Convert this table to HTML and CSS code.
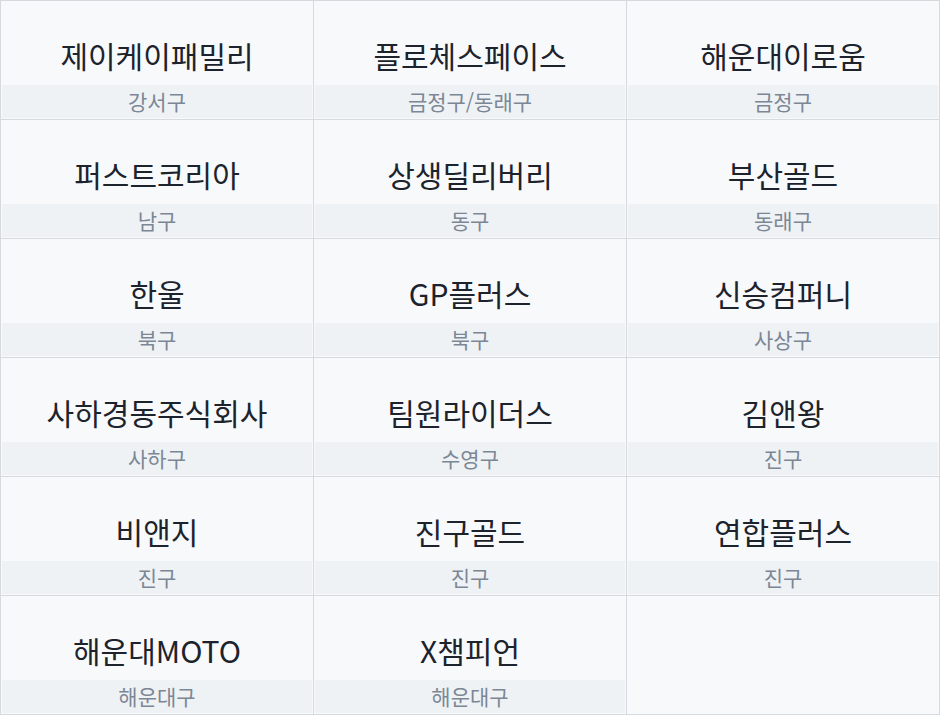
FILE: index.html
```html
<!DOCTYPE html>
<html lang="ko">
<head>
<meta charset="utf-8">
<link rel="stylesheet" href="styles.css">
</head>
<body>
<div class="grid">
  <div class="cell"><div class="name">제이케이패밀리</div><div class="area">강서구</div></div>
  <div class="cell"><div class="name">플로체스페이스</div><div class="area">금정구/동래구</div></div>
  <div class="cell"><div class="name">해운대이로움</div><div class="area">금정구</div></div>
  <div class="cell"><div class="name">퍼스트코리아</div><div class="area">남구</div></div>
  <div class="cell"><div class="name">상생딜리버리</div><div class="area">동구</div></div>
  <div class="cell"><div class="name">부산골드</div><div class="area">동래구</div></div>
  <div class="cell"><div class="name">한울</div><div class="area">북구</div></div>
  <div class="cell"><div class="name">GP플러스</div><div class="area">북구</div></div>
  <div class="cell"><div class="name">신승컴퍼니</div><div class="area">사상구</div></div>
  <div class="cell"><div class="name">사하경동주식회사</div><div class="area">사하구</div></div>
  <div class="cell"><div class="name">팀원라이더스</div><div class="area">수영구</div></div>
  <div class="cell"><div class="name">김앤왕</div><div class="area">진구</div></div>
  <div class="cell"><div class="name">비앤지</div><div class="area">진구</div></div>
  <div class="cell"><div class="name">진구골드</div><div class="area">진구</div></div>
  <div class="cell"><div class="name">연합플러스</div><div class="area">진구</div></div>
  <div class="cell"><div class="name">해운대MOTO</div><div class="area">해운대구</div></div>
  <div class="cell"><div class="name">X챔피언</div><div class="area">해운대구</div></div>
  <div class="cell cell-empty"></div>
</div>
</body>
</html>
```

FILE: styles.css
```css
html, body {
  margin: 0;
  padding: 0;
  background: #ffffff;
}

body {
  font-family: "Noto Sans CJK KR", "Noto Sans", sans-serif;
  width: 940px;
  height: 715px;
  overflow: hidden;
}

.grid {
  display: grid;
  grid-template-columns: repeat(3, 313px);
  grid-auto-rows: 119px;
  width: 940px;
  box-sizing: border-box;
  border-top: 1px solid #d6d9dd;
  border-left: 1px solid #d6d9dd;
  background: #f8f9fb;
}

.cell {
  display: flex;
  flex-direction: column;
  border-right: 1px solid #d6d9dd;
  border-bottom: 1px solid #d6d9dd;
  padding: 0 1px 1px 1px;
  background: #f8f9fb;
}

.name {
  height: 84px;
  box-sizing: border-box;
  padding-top: 35px;
  line-height: 38px;
  font-size: 30px;
  color: #1c232c;
  text-align: center;
  white-space: nowrap;
}

.area {
  height: 33px;
  box-sizing: border-box;
  padding-bottom: 1px;
  line-height: 32px;
  font-size: 21px;
  color: #7c8795;
  text-align: center;
  background: #eff2f5;
}
```
